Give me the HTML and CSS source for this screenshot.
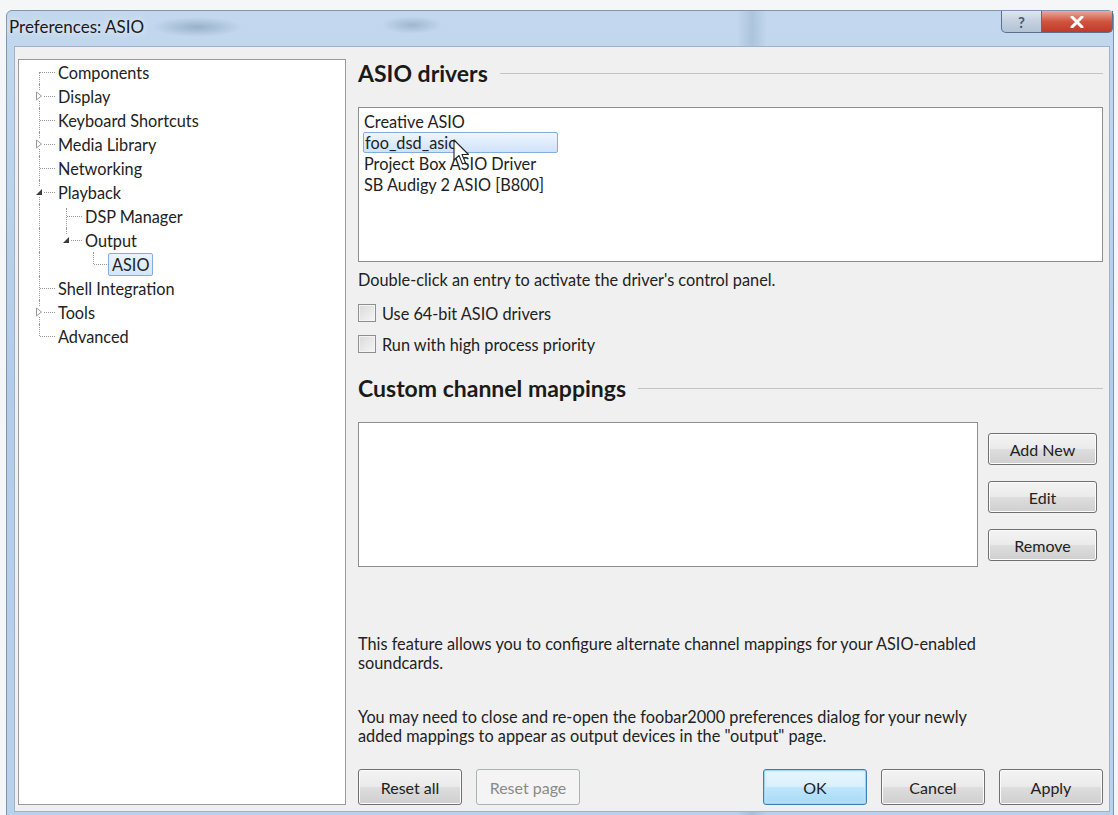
FILE: index.html
```html
<!DOCTYPE html>
<html lang="en">
<head>
  <meta charset="UTF-8">
  <title>Preferences: ASIO</title>
  <link rel="stylesheet" href="styles.css">
</head>
<body>
  <div class="window">
    <div class="titlebar">
      <span class="title">Preferences: ASIO</span>
      <div class="caption-buttons">
        <span class="cap-btn help">?</span>
        <span class="cap-btn close">
          <svg width="14" height="12" viewBox="0 0 14 12"><path d="M2 1 L12 11 M12 1 L2 11" stroke="#fff" stroke-width="3" stroke-linecap="round"/></svg>
        </span>
      </div>
    </div>

    <div class="client">
      <!-- page tree -->
      <div class="tree">
        <div class="node"><span class="guide first"></span><span class="label">Components</span></div>
        <div class="node"><span class="guide tee"><svg class="exp" width="8" height="10"><path d="M1.5 1 L6.5 5 L1.5 9 Z" fill="#fff" stroke="#9a9a9a"/></svg></span><span class="label">Display</span></div>
        <div class="node"><span class="guide tee"></span><span class="label">Keyboard Shortcuts</span></div>
        <div class="node"><span class="guide tee"><svg class="exp" width="8" height="10"><path d="M1.5 1 L6.5 5 L1.5 9 Z" fill="#fff" stroke="#9a9a9a"/></svg></span><span class="label">Media Library</span></div>
        <div class="node"><span class="guide tee"></span><span class="label">Networking</span></div>
        <div class="node"><span class="guide tee"><svg class="exp" width="8" height="10"><path d="M7 2 L7 8 L1 8 Z" fill="#3c3c3c"/></svg></span><span class="label">Playback</span></div>
        <div class="node"><span class="guide pipe"></span><span class="guide first-tee"></span><span class="label">DSP Manager</span></div>
        <div class="node"><span class="guide pipe"></span><span class="guide last"><svg class="exp" width="8" height="10"><path d="M7 2 L7 8 L1 8 Z" fill="#3c3c3c"/></svg></span><span class="label">Output</span></div>
        <div class="node"><span class="guide pipe"></span><span class="guide"></span><span class="guide last"></span><span class="label selected">ASIO</span></div>
        <div class="node"><span class="guide tee"></span><span class="label">Shell Integration</span></div>
        <div class="node"><span class="guide tee"><svg class="exp" width="8" height="10"><path d="M1.5 1 L6.5 5 L1.5 9 Z" fill="#fff" stroke="#9a9a9a"/></svg></span><span class="label">Tools</span></div>
        <div class="node"><span class="guide last"></span><span class="label">Advanced</span></div>
      </div>

      <!-- ASIO page -->
      <div class="page">
        <div class="heading"><span>ASIO drivers</span></div>
        <div class="listbox drivers">
          <div class="item">Creative ASIO</div>
          <div class="item hot">foo_dsd_asio</div>
          <div class="item">Project Box ASIO Driver</div>
          <div class="item">SB Audigy 2 ASIO [B800]</div>
          <svg class="cursor" width="17" height="27" viewBox="0 0 17 27"><path d="M1 1 L1 21 L6 16.5 L9.5 25 L12.5 23.8 L9 15.5 L15.5 15.5 Z" fill="#fff" stroke="#222" stroke-width="1.1" stroke-linejoin="round"/></svg>
        </div>
        <div class="note">Double-click an entry to activate the driver's control panel.</div>
        <label class="check-row first-check"><span class="check"></span>Use 64-bit ASIO drivers</label>
        <label class="check-row"><span class="check"></span>Run with high process priority</label>

        <div class="heading second"><span>Custom channel mappings</span></div>
        <div class="mappings">
          <div class="listbox map-list"></div>
          <div class="side-buttons">
            <button class="btn">Add New</button>
            <button class="btn">Edit</button>
            <button class="btn">Remove</button>
          </div>
        </div>

        <p class="info first-info">This feature allows you to configure alternate channel mappings for your ASIO-enabled<br>soundcards.</p>
        <p class="info">You may need to close and re-open the foobar2000 preferences dialog for your newly<br>added mappings to appear as output devices in the "output" page.</p>

        <div class="footer">
          <button class="btn">Reset all</button>
          <button class="btn disabled">Reset page</button>
          <span class="spacer"></span>
          <button class="btn default">OK</button>
          <button class="btn">Cancel</button>
          <button class="btn">Apply</button>
        </div>
      </div>
    </div>
  </div>
</body>
</html>
```

FILE: styles.css
```css
html, body { margin: 0; height: 100%; overflow: hidden; }
body { background: #f4f6f8; font-family: Lato, "Open Sans", sans-serif; font-size: 16.3px; color: #222; }

.window { width: 1108px; height: 830px; margin: 10px 0 0 6px; box-sizing: border-box; border: 1px solid #7d95b1; border-radius: 6px 6px 0 0;
  background:
    radial-gradient(ellipse 45px 10px at 190px 16px, rgba(90,120,150,0.4), transparent),
    radial-gradient(ellipse 30px 9px at 405px 14px, rgba(90,120,150,0.35), transparent),
    linear-gradient(to right, transparent 730px, rgba(120,150,180,0.3) 745px, transparent 760px),
    linear-gradient(to bottom, #c3d8ee, #b2cde9 45%, #b9d2ec);
}
.titlebar { height: 35px; display: flex; align-items: flex-start; }
.title { margin: 5px 0 0 2px; font-size: 17px; color: #1a1a1a; text-shadow: 0 0 6px rgba(255,255,255,0.9); }
.caption-buttons { margin-left: auto; display: flex; }
.cap-btn { height: 21px; display: flex; align-items: center; justify-content: center; border: 1px solid #5a6f89; border-top: none; }
.help { width: 39px; border-radius: 0 0 0 5px; background: linear-gradient(#dfe7f0, #c3d0de 50%, #b3c3d6); color: #4a5a70; font-weight: bold; font-size: 15px; }
.close { width: 70px; border-left: none; border-radius: 0 0 5px 0; background: linear-gradient(#e9a99c, #d0553f 50%, #c0392a); }

.client { height: 766px; margin: 0 3px 0 7px; box-sizing: border-box; border: 1px solid #9eb3c9; background: #f0f0f0; display: flex; gap: 12px; padding: 12px 6px 6px 3px; }

/* tree */
.tree { width: 328px; flex: none; box-sizing: border-box; background: #fff; border: 1px solid #9a9a9a; padding: 0 0 0 11px; }
.node { height: 24px; display: flex; align-items: center; }
.guide { width: 27px; height: 24px; position: relative; flex: none; }
.guide::before, .guide::after { content: ""; position: absolute; }
.pipe::before, .tee::before { left: 9px; top: 0; bottom: 0; border-left: 1px dotted #999; }
.first::before { left: 9px; top: 12px; bottom: 0; border-left: 1px dotted #999; }
.first-tee::before { left: 9px; top: 4px; bottom: 0; border-left: 1px dotted #999; }
.last::before { left: 9px; top: 0; height: 12px; border-left: 1px dotted #999; }
.first::after, .tee::after, .last::after, .first-tee::after { left: 10px; width: 15px; top: 12px; border-top: 1px dotted #999; }
.exp { position: absolute; left: 5px; top: 7px; background: #fff; z-index: 1; }
.label { margin-left: -3px; padding: 1px 3px; line-height: 19px; border: 1px solid transparent; border-radius: 2px; white-space: nowrap; }
.label.selected { border-color: #84acdd; background: linear-gradient(#eaf3fd, #d4e6fb); }

/* right page */
.page { flex: 1; display: flex; flex-direction: column; }
.heading { display: flex; align-items: center; gap: 12px; height: 26px; margin-top: 1px; font-size: 23px; font-weight: bold; color: #1a1a1a; }
.heading::after { content: ""; flex: 1; border-top: 1px solid #c4c4c4; }
.heading.second { margin-top: 21px; }

.listbox { background: #fff; border: 1px solid #8e8e8e; box-sizing: border-box; }
.drivers { height: 155px; margin-top: 21px; padding: 3px 4px; position: relative; }
.item { height: 21px; line-height: 21px; padding-left: 1px; }
.item.hot { width: 195px; box-sizing: border-box; border: 1px solid #84acdd; border-radius: 2px; line-height: 19px; background: linear-gradient(#eef5fd, #cfe3f9); }
.cursor { position: absolute; left: 94px; top: 31px; }

.note { margin-top: 8px; line-height: 20px; }
.check-row { display: flex; align-items: center; gap: 6px; height: 20px; margin-top: 11px; }
.check-row.first-check { margin-top: 13px; }
.check { width: 16px; height: 16px; border: 1px solid #8f8f8f; background: linear-gradient(135deg, #d9d9d9, #f6f6f6); box-shadow: inset 0 0 0 1px #f4f4f4; }

.mappings { display: flex; gap: 10px; margin-top: 21px; }
.map-list { width: 620px; height: 145px; }
.side-buttons { display: flex; flex-direction: column; gap: 16px; padding-top: 11px; }
.side-buttons .btn { width: 109px; height: 32px; }

.info { margin: 0; line-height: 19px; }
.info.first-info { margin-top: 67px; }
.info + .info { margin-top: 35px; }

.btn { font-family: inherit; font-size: 16px; color: #222; height: 36px; width: 104px; border: 1px solid #707070; border-radius: 3px; padding: 0;
  background: linear-gradient(#f3f3f3, #ebebeb 48%, #dddddd 52%, #cfcfcf); box-shadow: inset 0 0 0 1px #fcfcfc; }
.btn.disabled { color: #8a8a8a; border-color: #adb2b5; background: #f4f4f4; box-shadow: none; }
.btn.default { border-color: #3c7fb1; box-shadow: inset 0 0 0 1px #9fd4f5, inset 0 0 3px 1px #c8e8fb; background: linear-gradient(#eaf6fd, #d9f0fc 48%, #bee6fd 52%, #a7d9f5); }
.footer { margin-top: auto; display: flex; gap: 14px; }
.spacer { flex: 1; }
```
